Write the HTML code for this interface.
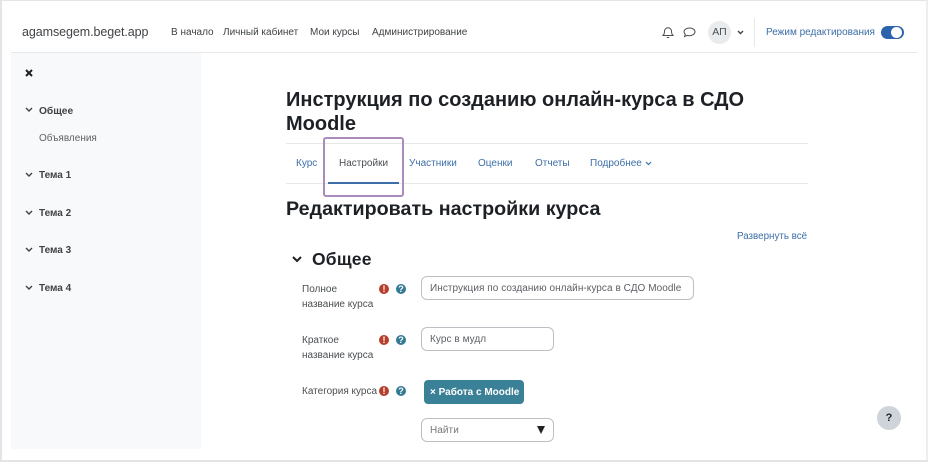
<!DOCTYPE html>
<html><head><meta charset="utf-8"><style>
html,body{margin:0;padding:0;background:#fff}
body{width:928px;height:462px;position:relative;overflow:hidden;font-family:"Liberation Sans",sans-serif;color:#444}
.a{position:absolute;white-space:nowrap;line-height:16px}
.b{position:absolute}
.n{font-size:10px;color:#3f4347;top:25px}
.t{font-size:10px;color:#3d6ea8;top:156px}
.s{font-size:10px;font-weight:bold;color:#3f4347;left:39px}
.l{font-size:10px;color:#4a4e52;left:302px}
h1{position:absolute;margin:0;font-size:20px;font-weight:bold;color:#1d2125;white-space:nowrap;line-height:26px}
.inp{position:absolute;box-sizing:border-box;border:1px solid #bcc0c4;border-radius:6px;background:#fff;font-size:10px;color:#5c6065;padding-left:8px;line-height:24px;height:24px;white-space:nowrap;letter-spacing:.06px}
.r{position:absolute;width:10px;height:10px;border-radius:50%;background:#b63f2c;color:#fff;font-size:9px;font-weight:bold;text-align:center;line-height:10px}
.q{position:absolute;width:10px;height:10px;border-radius:50%;background:#357a93;color:#fff;font-size:9px;font-weight:bold;text-align:center;line-height:10px}
svg{position:absolute;overflow:visible}
</style></head><body>
<div class="b" style="left:0;top:0;width:928px;height:1px;background:#e2e4e6"></div>
<div class="b" style="left:0;top:0;width:2px;height:462px;background:#e2e4e6"></div>
<div class="b" style="left:926px;top:0;width:2px;height:462px;background:#eceef0"></div>
<div class="b" style="left:0;top:460px;width:928px;height:2px;background:#e2e4e6"></div>
<div class="b" style="left:11px;top:52px;width:906px;height:1px;background:#e6e8ea"></div>
<div class="b" style="left:11px;top:53px;width:190px;height:396px;background:#f8f9fa"></div>

<div class="a" style="left:22px;top:24px;font-size:12.5px;color:#3f4347;letter-spacing:-.08px">agamsegem.beget.app</div>
<div class="a n" style="left:171px">В начало</div>
<div class="a n" style="left:223px">Личный кабинет</div>
<div class="a n" style="left:310px">Мои курсы</div>
<div class="a n" style="left:372px">Администрирование</div>

<svg style="left:662px;top:26px" width="12" height="13" viewBox="0 0 12 13" fill="none" stroke="#4a4e52" stroke-width="1"><path d="M1 9.500c1-1 1.500-2 1.500-4.200a3.500 3.500 0 0 1 7 0c0 2.200 .5 3.200 1.500 4.200z"/><path d="M4.800 11.500h2.400"/></svg>
<svg style="left:683px;top:27px" width="13" height="11" viewBox="0 0 13 11" fill="none" stroke="#4a4e52" stroke-width="1"><path d="M6.500 1C3.500 1 1 2.700 1 4.800c0 1 .5 1.800 1.300 2.500L1.500 9.500l2.700-1.100c.7.200 1.500.300 2.300.300 3 0 5.500-1.700 5.500-3.900S9.500 1 6.500 1z"/></svg>
<div class="b" style="left:708px;top:21px;width:23px;height:23px;border-radius:50%;background:#e9ecef"></div>
<div class="a" style="left:708px;top:24px;width:23px;text-align:center;font-size:10.5px;color:#4a4e52">АП</div>
<svg style="left:737px;top:30px" width="7" height="5" viewBox="0 0 7 5" fill="none" stroke="#3f4347" stroke-width="1.400"><path d="M1 1l2.500 2.500L6 1"/></svg>
<div class="b" style="left:754px;top:18px;width:1px;height:29px;background:#e6e8ea"></div>
<div class="a" style="left:766px;top:25px;font-size:10px;color:#3d6ea8">Режим редактирования</div>
<div class="b" style="left:881px;top:26px;width:23px;height:13px;border-radius:7px;background:#2b64ad"></div>
<div class="b" style="left:891px;top:27px;width:11px;height:11px;border-radius:50%;background:#fff"></div>

<svg style="left:25px;top:69px" width="8" height="8" viewBox="0 0 8 8" fill="none" stroke="#1d2125" stroke-width="2"><path d="M1 1l6 6M7 1L1 7"/></svg>
<svg style="left:25px;top:107px" width="8" height="5" viewBox="0 0 8 5" fill="none" stroke="#3f4347" stroke-width="1.400"><path d="M1 1l3 3 3-3"/></svg>
<div class="a s" style="top:104px;font-size:10.2px">Общее</div>
<div class="a" style="left:39px;top:131px;font-size:10px;color:#5f6367">Объявления</div>
<svg style="left:25px;top:172px" width="8" height="5" viewBox="0 0 8 5" fill="none" stroke="#3f4347" stroke-width="1.400"><path d="M1 1l3 3 3-3"/></svg>
<div class="a s" style="top:168px">Тема 1</div>
<svg style="left:25px;top:210px" width="8" height="5" viewBox="0 0 8 5" fill="none" stroke="#3f4347" stroke-width="1.400"><path d="M1 1l3 3 3-3"/></svg>
<div class="a s" style="top:206px">Тема 2</div>
<svg style="left:25px;top:247px" width="8" height="5" viewBox="0 0 8 5" fill="none" stroke="#3f4347" stroke-width="1.400"><path d="M1 1l3 3 3-3"/></svg>
<div class="a s" style="top:243px">Тема 3</div>
<svg style="left:25px;top:285px" width="8" height="5" viewBox="0 0 8 5" fill="none" stroke="#3f4347" stroke-width="1.400"><path d="M1 1l3 3 3-3"/></svg>
<div class="a s" style="top:281px">Тема 4</div>

<h1 style="left:286px;top:87px">Инструкция по созданию онлайн-курса в СДО</h1>
<h1 style="left:286px;top:111px">Moodle</h1>
<div class="b" style="left:286px;top:143px;width:522px;height:1px;background:#e6e8ea"></div>
<div class="b" style="left:286px;top:183px;width:522px;height:1px;background:#e6e8ea"></div>
<div class="a t" style="left:296px">Курс</div>
<div class="a t" style="left:339px;color:#4a4e52">Настройки</div>
<div class="a t" style="left:409px">Участники</div>
<div class="a t" style="left:478px">Оценки</div>
<div class="a t" style="left:535px">Отчеты</div>
<div class="a t" style="left:590px">Подробнее</div>
<svg style="left:645px;top:161px" width="7" height="5" viewBox="0 0 7 5" fill="none" stroke="#3d6ea8" stroke-width="1.200"><path d="M1 1l2.500 2.500L6 1"/></svg>
<div class="b" style="left:328px;top:182px;width:71px;height:2px;background:#3d6ea8"></div>
<div class="b" style="left:323px;top:137px;width:81px;height:60px;box-sizing:border-box;border:2px solid #a98cbc;border-radius:3px"></div>

<h1 style="left:286px;top:196px;font-size:19.7px">Редактировать настройки курса</h1>
<div class="a" style="left:737px;top:229px;font-size:9.8px;color:#3d6ea8">Развернуть всё</div>
<svg style="left:292px;top:256px" width="10" height="7" viewBox="0 0 10 7" fill="none" stroke="#1d2125" stroke-width="2"><path d="M1 1l4 4 4-4"/></svg>
<div class="a" style="left:312px;top:250px;font-size:17.5px;font-weight:bold;color:#1d2125;line-height:18px;letter-spacing:.2px">Общее</div>

<div class="a l" style="top:282px">Полное</div>
<div class="a l" style="top:297px">название курса</div>
<div class="r" style="left:379px;top:284px">!</div><div class="q" style="left:396px;top:284px">?</div>
<div class="inp" style="left:421px;top:276px;width:273px">Инструкция по созданию онлайн-курса в СДО Moodle</div>
<div class="a l" style="top:333px">Краткое</div>
<div class="a l" style="top:348px">название курса</div>
<div class="r" style="left:379px;top:335px">!</div><div class="q" style="left:396px;top:335px">?</div>
<div class="inp" style="left:421px;top:327px;width:133px">Курс в мудл</div>
<div class="a l" style="top:384px">Категория курса</div>
<div class="r" style="left:379px;top:386px">!</div><div class="q" style="left:396px;top:386px">?</div>
<div class="a" style="left:424px;top:380px;width:100px;height:24px;border-radius:4px;background:#3a8096;color:#fff;font-size:10px;font-weight:bold;line-height:25px;text-indent:6px">× Работа с Moodle</div>
<div class="inp" style="left:421px;top:418px;width:133px;color:#777">Найти</div>
<svg style="left:537px;top:426px" width="8" height="8" viewBox="0 0 8 8"><path d="M0 0h8L4 8z" fill="#222"/></svg>

<div class="b" style="left:877px;top:406px;width:24px;height:24px;border-radius:50%;background:#ced4da"></div>
<div class="a" style="left:877px;top:410px;width:24px;text-align:center;font-size:11px;font-weight:bold;color:#1d2125">?</div>
</body></html>
